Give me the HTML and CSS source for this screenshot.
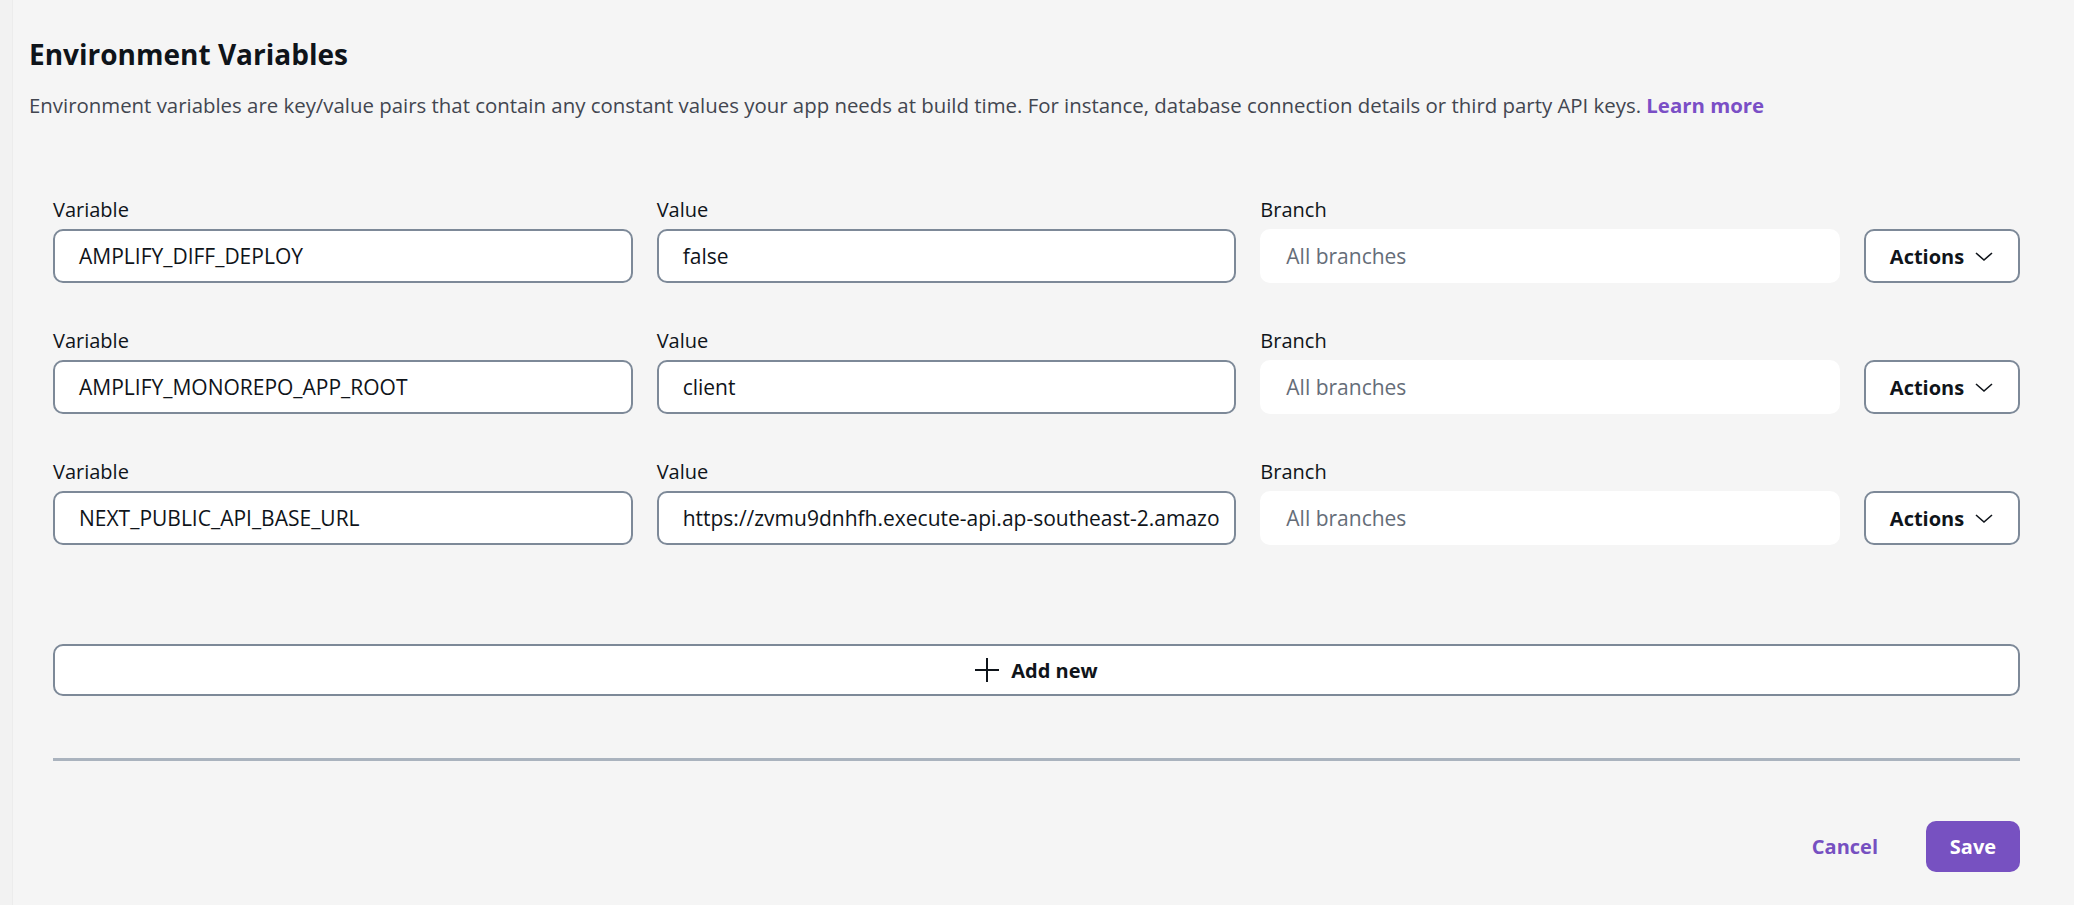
FILE: index.html
```html
<!DOCTYPE html>
<html lang="en">
<head>
<meta charset="utf-8">
<title>Environment Variables</title>
<link rel="stylesheet" href="styles.css">
</head>
<body>
<div class="edge"></div>
<main class="page">
  <h1 class="title">Environment Variables</h1>
  <p class="desc">Environment variables are key/value pairs that contain any constant values your app needs at build time. For instance, database connection details or third party API keys. <a class="link" href="#">Learn more</a></p>

  <section class="form">
    <div class="rows">
      <div class="row">
        <div class="field"><label class="label">Variable</label><div class="input">AMPLIFY_DIFF_DEPLOY</div></div>
        <div class="field"><label class="label">Value</label><div class="input">false</div></div>
        <div class="field"><label class="label">Branch</label><div class="input branch">All branches</div></div>
        <div class="field action"><button class="actions">Actions <svg class="chev" width="20" height="11" viewBox="0 0 20 11"><polyline points="2,2 10,9 18,2" fill="none" stroke="#0f141a" stroke-width="1.6"/></svg></button></div>
      </div>
      <div class="row">
        <div class="field"><label class="label">Variable</label><div class="input">AMPLIFY_MONOREPO_APP_ROOT</div></div>
        <div class="field"><label class="label">Value</label><div class="input">client</div></div>
        <div class="field"><label class="label">Branch</label><div class="input branch">All branches</div></div>
        <div class="field action"><button class="actions">Actions <svg class="chev" width="20" height="11" viewBox="0 0 20 11"><polyline points="2,2 10,9 18,2" fill="none" stroke="#0f141a" stroke-width="1.6"/></svg></button></div>
      </div>
      <div class="row">
        <div class="field"><label class="label">Variable</label><div class="input">NEXT_PUBLIC_API_BASE_URL</div></div>
        <div class="field"><label class="label">Value</label><div class="input">https://zvmu9dnhfh.execute-api.ap-southeast-2.amazo</div></div>
        <div class="field"><label class="label">Branch</label><div class="input branch">All branches</div></div>
        <div class="field action"><button class="actions">Actions <svg class="chev" width="20" height="11" viewBox="0 0 20 11"><polyline points="2,2 10,9 18,2" fill="none" stroke="#0f141a" stroke-width="1.6"/></svg></button></div>
      </div>
    </div>

    <button class="addnew"><svg width="24" height="24" viewBox="0 0 24 24"><line x1="12" y1="0" x2="12" y2="24" stroke="#0f141a" stroke-width="2"/><line x1="0" y1="12" x2="24" y2="12" stroke="#0f141a" stroke-width="2"/></svg><span>Add new</span></button>

    <hr class="divider">

    <div class="footer">
      <button class="cancel">Cancel</button>
      <button class="save">Save</button>
    </div>
  </section>
</main>
</body>
</html>
```

FILE: styles.css
```css
* { box-sizing: border-box; }
html, body { margin: 0; padding: 0; }
body {
  background: #f5f5f5;
  font-family: "Open Sans", Roboto, Arial, sans-serif;
  color: #0f141a;
  height: 905px;
  overflow: hidden;
  display: flex;
}
.edge {
  width: 13px;
  flex: none;
  background: #f2f2f2;
  border-right: 1px solid #ececec;
}
.page {
  flex: 1;
  padding: 36px 54px 0 16px;
}
.title {
  margin: 0;
  font-size: 28px;
  line-height: 36px;
  font-weight: 700;
  color: #0f141a;
}
.desc {
  margin: 19px 0 0 0;
  font-size: 20.4px;
  line-height: 28px;
  color: #424650;
}
.link {
  color: #7a4fc6;
  font-weight: 700;
  text-decoration: none;
}
.form {
  padding-left: 24px;
  margin-top: 77px;
}
.rows {
  display: flex;
  flex-direction: column;
  gap: 44px;
}
.row {
  display: grid;
  grid-template-columns: 1fr 1fr 1fr 156px;
  column-gap: 24px;
}
.field {
  display: flex;
  flex-direction: column;
  gap: 5px;
  min-width: 0;
}
.action { justify-content: flex-end; }
.label {
  font-size: 20px;
  line-height: 28px;
  color: #0f141a;
}
.input {
  height: 54px;
  border: 2px solid #7d8998;
  border-radius: 10px;
  background: #fff;
  padding: 0 24px;
  font-size: 21px;
  line-height: 50px;
  white-space: nowrap;
  overflow: hidden;
  color: #0f141a;
}
.branch {
  border-color: #fff;
  color: #656d78;
}
button {
  font-family: inherit;
  cursor: pointer;
}
.actions {
  height: 54px;
  border: 2px solid #7d8998;
  border-radius: 10px;
  background: #fff;
  font-size: 20px;
  font-weight: 700;
  color: #0f141a;
  display: flex;
  align-items: center;
  justify-content: center;
  gap: 10px;
  padding: 0;
}
.chev { display: block; }
.addnew {
  margin-top: 99px;
  width: 100%;
  height: 52px;
  border: 2px solid #7d8998;
  border-radius: 10px;
  background: #fff;
  display: flex;
  align-items: center;
  justify-content: center;
  gap: 12px;
  font-size: 20px;
  font-weight: 700;
  color: #0f141a;
}
.addnew svg { display: block; }
.divider {
  margin: 62px 0 0 0;
  border: 0;
  height: 3px;
  background: #aab3be;
}
.footer {
  margin-top: 60px;
  display: flex;
  justify-content: flex-end;
  align-items: center;
  gap: 48px;
}
.cancel {
  border: 0;
  background: transparent;
  color: #7650c1;
  font-size: 20px;
  font-weight: 700;
  padding: 0;
}
.save {
  width: 94px;
  height: 51px;
  border: 0;
  border-radius: 10px;
  background: #7751c1;
  color: #fff;
  font-size: 20px;
  font-weight: 700;
}
```
